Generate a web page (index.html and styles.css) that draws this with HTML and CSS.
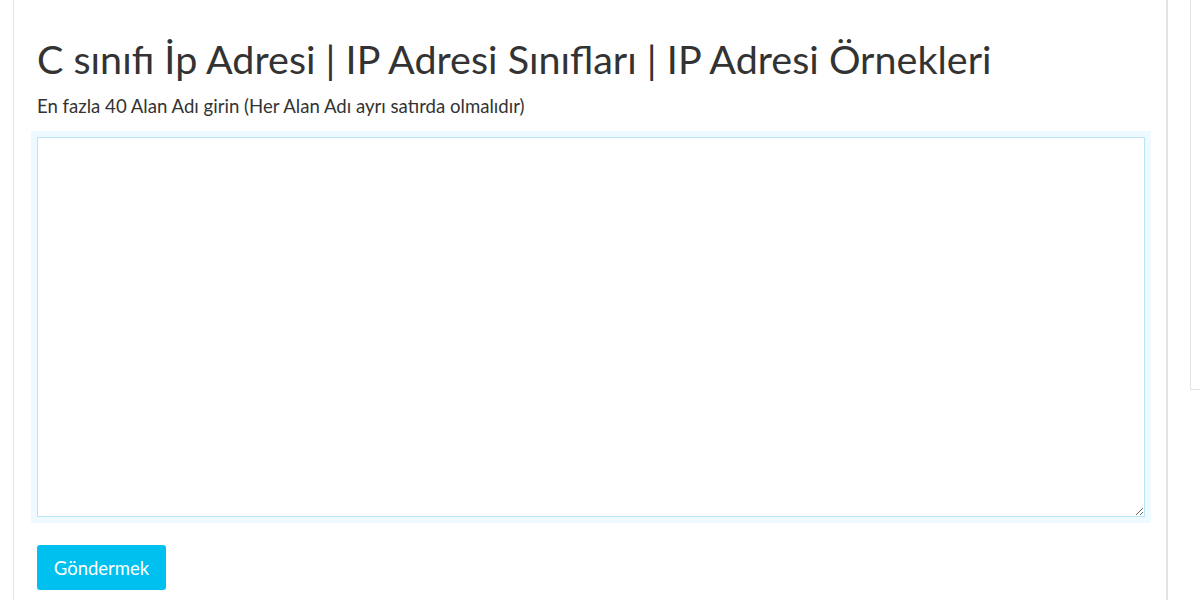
FILE: index.html
```html
<!DOCTYPE html>
<html lang="tr">
<head>
<meta charset="utf-8">
<link rel="stylesheet" href="styles.css">
</head>
<body>
<div class="page">
  <main class="panel">
    <h1 class="title">C sınıfı İp Adresi | IP Adresi Sınıfları | IP Adresi Örnekleri</h1>
    <p class="hint">En fazla 40 Alan Adı girin (Her Alan Adı ayrı satırda olmalıdır)</p>
    <textarea class="domains"></textarea>
    <button class="submit" type="button">Göndermek</button>
  </main>
  <aside class="side"></aside>
</div>
</body>
</html>
```
FILE: styles.css
```css
html, body {
  margin: 0;
  padding: 0;
  background: #fff;
}
body {
  font-family: Lato, "Open Sans", sans-serif;
  color: #333;
  height: 600px;
  overflow: hidden;
}
.page {
  display: flex;
  align-items: flex-start;
  padding-left: 13px;
  gap: 22px;
}
.panel {
  width: 1108px;
  flex: none;
  border-left: 1px solid #e3e3e3;
  border-right: 2px solid #e3e3e3;
  padding: 34px 21px 10px 23px;
  box-sizing: content-box;
  display: flex;
  flex-direction: column;
  align-items: flex-start;
}
.title {
  margin: 0;
  font-weight: 400;
  font-size: 39.5px;
  line-height: 50px;
  color: #333;
  white-space: nowrap;
}
.hint {
  margin: 10px 0 0;
  font-size: 18.6px;
  line-height: 24px;
  color: #333;
  white-space: nowrap;
}
.domains {
  margin-top: 19px;
  width: 1108px;
  height: 380px;
  box-sizing: border-box;
  border: 1px solid #b9e5f6;
  box-shadow: 0 0 0 6px #eefaff;
  resize: vertical;
  outline: none;
  background: #fff;
}
.submit {
  margin-top: 28px;
  width: 129px;
  height: 45px;
  border: 0;
  border-radius: 3px;
  background: #00c0ef;
  color: #fff;
  font-family: Lato, "Open Sans", sans-serif;
  font-size: 18.5px;
}
.side {
  flex: 1;
  height: 389px;
  border-left: 1px solid #e3e3e3;
  border-bottom: 1px solid #e3e3e3;
}
```
